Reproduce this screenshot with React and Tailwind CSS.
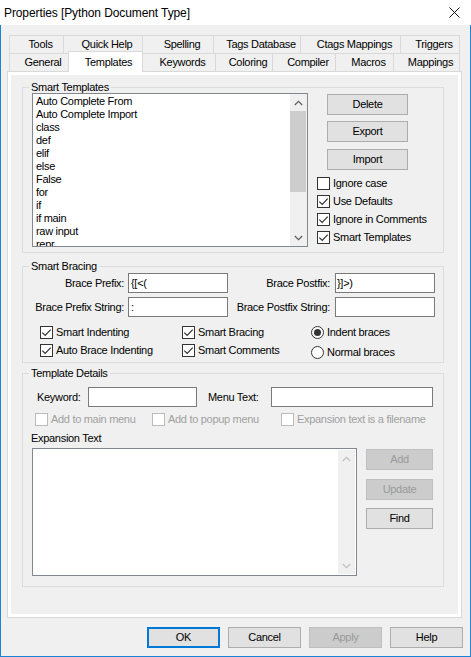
import React from "react";

function Check({ checked, disabled }) {
  return (
    <span
      className={
        disabled
          ? "w-[13px] h-[13px] border border-[#bcbcbc] bg-white flex items-center justify-center shrink-0"
          : "w-[13px] h-[13px] border border-[#333333] bg-white flex items-center justify-center shrink-0"
      }
    >
      {checked && (
        <svg width="11" height="11" viewBox="0 0 11 11">
          <path d="M1.3 5.6 L4.2 8.5 L9.7 2.6" fill="none" stroke="#333333" strokeWidth="1.2" />
        </svg>
      )}
    </span>
  );
}

function Radio({ checked }) {
  return (
    <span className="w-[13px] h-[13px] rounded-full border border-[#333333] bg-white flex items-center justify-center shrink-0">
      {checked && <span className="w-[7px] h-[7px] rounded-full bg-[#333333]" />}
    </span>
  );
}

function Chevron({ up, color }) {
  return (
    <svg width="9" height="6" viewBox="0 0 9 6">
      <path
        d={up ? "M0.8 5 L4.5 1.3 L8.2 5" : "M0.8 1 L4.5 4.7 L8.2 1"}
        fill="none"
        stroke={color}
        strokeWidth="1.3"
      />
    </svg>
  );
}

function Btn({ children, className }) {
  return (
    <div className={"h-[21px] border border-[#adadad] bg-[#e1e1e1] flex items-center justify-center " + className}>
      {children}
    </div>
  );
}

function DisBtn({ children, className }) {
  return (
    <div className={"h-[21px] border border-[#bfbfbf] bg-[#cccccc] text-[#9a9a9a] flex items-center justify-center " + className}>
      {children}
    </div>
  );
}

const items = [
  "Auto Complete From",
  "Auto Complete Import",
  "class",
  "def",
  "elif",
  "else",
  "False",
  "for",
  "if",
  "if main",
  "raw input",
  "repr",
];

export default function App() {
  return (
    <div className="w-[471px] h-[657px] flex flex-col bg-[#f0f0f0] text-black text-[11px] tracking-[-0.3px] font-['Liberation_Sans',Arial,sans-serif] overflow-hidden">
      {/* Title bar */}
      <div className="h-[25px] bg-white flex items-center pl-[4px] pr-[11px] shrink-0">
        <span className="text-[12px] tracking-[-0.1px] flex-1">Properties [Python Document Type]</span>
        <svg width="11" height="11" viewBox="0 0 11 11">
          <path d="M0.5 0.5 L10.5 10.5 M10.5 0.5 L0.5 10.5" stroke="#111111" strokeWidth="1" />
        </svg>
      </div>

      {/* Body */}
      <div className="flex-1 flex flex-col border-l border-r border-b border-[#1883d7]">
        {/* Tabs */}
        <div className="mt-[10px] ml-[8px] flex flex-col">
          <div className="flex h-[18px]">
            <div className="w-[54px] h-[18px] border-l border-t border-[#d9d9d9] flex items-center justify-center pl-[8px]">Tools</div>
            <div className="w-[79px] h-[18px] border-l border-t border-[#d9d9d9] flex items-center justify-center pl-[8px]">Quick Help</div>
            <div className="w-[71px] h-[18px] border-l border-t border-[#d9d9d9] flex items-center justify-center pl-[8px]">Spelling</div>
            <div className="w-[87px] h-[18px] border-l border-t border-[#d9d9d9] flex items-center justify-center pl-[8px]">Tags Database</div>
            <div className="w-[100px] h-[18px] border-l border-t border-[#d9d9d9] flex items-center justify-center pl-[8px]">Ctags Mappings</div>
            <div className="w-[60px] h-[18px] border-l border-t border-r border-[#d9d9d9] flex items-center justify-center pl-[8px]">Triggers</div>
          </div>
          <div className="flex h-[18px]">
            <div className="w-[61px] h-[18px] border-l border-t border-[#d9d9d9] flex items-center justify-center pl-[6px]">General</div>
            <div className="relative z-10 -mx-[2px] -mt-[2px] w-[75px] h-[21px] bg-white border-l border-t border-r border-[#d9d9d9] flex items-center justify-center pl-[6px]">Templates</div>
            <div className="w-[74px] h-[18px] border-l border-t border-[#d9d9d9] flex items-center justify-center pl-[8px]">Keywords</div>
            <div className="w-[57px] h-[18px] border-l border-t border-[#d9d9d9] flex items-center justify-center pl-[8px]">Coloring</div>
            <div className="w-[63px] h-[18px] border-l border-t border-[#d9d9d9] flex items-center justify-center pl-[8px]">Compiler</div>
            <div className="w-[58px] h-[18px] border-l border-t border-[#d9d9d9] flex items-center justify-center pl-[8px]">Macros</div>
            <div className="w-[67px] h-[18px] border-l border-t border-r border-[#d9d9d9] flex items-center justify-center pl-[8px]">Mappings</div>
          </div>
        </div>

        {/* Panel */}
        <div className="ml-[6px] w-[455px] h-[547px] border border-[#d9d9d9] bg-white p-[3px] shrink-0">
          <div className="h-full bg-[#f0f0f0] flex flex-col">
            {/* Smart Templates */}
            <fieldset className="ml-[11px] mt-[5px] w-[422px] h-[173px] border border-[#dcdcdc]">
              <legend className="ml-[6px] px-[2px] h-[14px] leading-[14px]">Smart Templates</legend>
              <div className="flex">
                <div className="ml-[9px] -mt-[1px] w-[276px] h-[154px] border border-[#828790] bg-white flex">
                  <div className="flex-1 pl-[3px] pt-[1px] overflow-hidden">
                    {items.map((t) => (
                      <div key={t} className="h-[13px] leading-[13px] whitespace-nowrap">{t}</div>
                    ))}
                  </div>
                  <div className="w-[17px] bg-[#f0f0f0] flex flex-col">
                    <div className="h-[17px] flex items-center justify-center">
                      <Chevron up color="#606060" />
                    </div>
                    <div className="h-[81px] mr-[1px] bg-[#cdcdcd]" />
                    <div className="flex-1" />
                    <div className="h-[17px] flex items-center justify-center">
                      <Chevron color="#606060" />
                    </div>
                  </div>
                </div>
                <div className="ml-[9px] flex flex-col">
                  <Btn className="ml-[10px] w-[81px]">Delete</Btn>
                  <Btn className="ml-[10px] mt-[6px] w-[81px]">Export</Btn>
                  <Btn className="ml-[10px] mt-[7px] w-[81px]">Import</Btn>
                  <div className="mt-[4px] flex flex-col">
                    <div className="h-[18px] flex items-center gap-[3px]"><Check />Ignore case</div>
                    <div className="h-[18px] flex items-center gap-[3px]"><Check checked />Use Defaults</div>
                    <div className="h-[18px] flex items-center gap-[3px]"><Check checked />Ignore in Comments</div>
                    <div className="h-[18px] flex items-center gap-[3px]"><Check checked />Smart Templates</div>
                  </div>
                </div>
              </div>
            </fieldset>

            {/* Smart Bracing */}
            <fieldset className="ml-[11px] mt-[6px] w-[422px] h-[104px] border border-[#dcdcdc]">
              <legend className="ml-[6px] px-[2px] h-[14px] leading-[14px]">Smart Bracing</legend>
              <div className="flex h-[20px] items-center">
                <div className="w-[101px] text-right">Brace Prefix:</div>
                <div className="ml-[4px] w-[100px] h-[20px] border border-[#7a7a7a] bg-white px-[2px] leading-[18px]">{"{[<("}</div>
                <div className="w-[102px] text-right">Brace Postfix:</div>
                <div className="ml-[5px] w-[100px] h-[20px] border border-[#7a7a7a] bg-white px-[1px] leading-[18px]">{"}]>)"}</div>
              </div>
              <div className="mt-[4px] flex h-[20px] items-center">
                <div className="w-[101px] text-right">Brace Prefix String:</div>
                <div className="ml-[4px] w-[100px] h-[20px] border border-[#7a7a7a] bg-white px-[2px] leading-[18px]">:</div>
                <div className="w-[102px] text-right">Brace Postfix String:</div>
                <div className="ml-[5px] w-[100px] h-[20px] border border-[#7a7a7a] bg-white" />
              </div>
              <div className="mt-[6px] flex">
                <div className="ml-[17px] w-[142px] flex flex-col">
                  <div className="h-[18px] flex items-center gap-[3px]"><Check checked />Smart Indenting</div>
                  <div className="h-[18px] flex items-center gap-[3px]"><Check checked />Auto Brace Indenting</div>
                </div>
                <div className="w-[129px] flex flex-col">
                  <div className="h-[18px] flex items-center gap-[3px]"><Check checked />Smart Bracing</div>
                  <div className="h-[18px] flex items-center gap-[3px]"><Check checked />Smart Comments</div>
                </div>
                <div className="-mt-[1px] flex flex-col">
                  <div className="h-[20px] flex items-center gap-[3px]"><Radio checked />Indent braces</div>
                  <div className="h-[20px] flex items-center gap-[3px]"><Radio />Normal braces</div>
                </div>
              </div>
            </fieldset>

            {/* Template Details */}
            <fieldset className="ml-[11px] mt-[3px] w-[422px] h-[221px] border border-[#dcdcdc]">
              <legend className="ml-[6px] px-[2px] h-[14px] leading-[14px]">Template Details</legend>
              <div className="mt-[7px] flex h-[20px] items-center">
                <div className="ml-[14px] w-[51px]">Keyword:</div>
                <div className="w-[109px] h-[20px] border border-[#7a7a7a] bg-white" />
                <div className="ml-[11px] w-[63px]">Menu Text:</div>
                <div className="w-[162px] h-[20px] border border-[#7a7a7a] bg-white" />
              </div>
              <div className="mt-[6px] flex h-[13px] items-center text-[#a0a0a0]">
                <div className="ml-[12px] w-[117px] flex items-center gap-[3px]"><Check disabled />Add to main menu</div>
                <div className="w-[129px] flex items-center gap-[3px]"><Check disabled />Add to popup menu</div>
                <div className="flex items-center gap-[3px] whitespace-nowrap"><Check disabled />Expansion text is a filename</div>
              </div>
              <div className="mt-[6px] ml-[8px] h-[13px] leading-[13px]">Expansion Text</div>
              <div className="mt-[3px] flex">
                <div className="ml-[9px] w-[325px] h-[128px] border border-[#828790] bg-white flex">
                  <div className="flex-1" />
                  <div className="w-[17px] mr-[1px] my-[1px] bg-[#f0f0f0] flex flex-col justify-between">
                    <div className="h-[17px] flex items-center justify-center">
                      <Chevron up color="#c0c0c0" />
                    </div>
                    <div className="h-[17px] flex items-center justify-center">
                      <Chevron color="#c0c0c0" />
                    </div>
                  </div>
                </div>
                <div className="ml-[9px] mt-[1px] flex flex-col">
                  <DisBtn className="w-[67px]">Add</DisBtn>
                  <DisBtn className="mt-[9px] w-[67px]">Update</DisBtn>
                  <Btn className="mt-[8px] w-[67px]">Find</Btn>
                </div>
              </div>
            </fieldset>
          </div>
        </div>

        {/* Bottom buttons */}
        <div className="mt-[9px] flex justify-end gap-[8px] pr-[7px]">
          <div className="w-[73px] h-[21px] border-2 border-[#0078d7] bg-[#e1e1e1] flex items-center justify-center">OK</div>
          <Btn className="w-[73px]">Cancel</Btn>
          <DisBtn className="w-[73px]">Apply</DisBtn>
          <Btn className="w-[73px]">Help</Btn>
        </div>
      </div>
    </div>
  );
}
